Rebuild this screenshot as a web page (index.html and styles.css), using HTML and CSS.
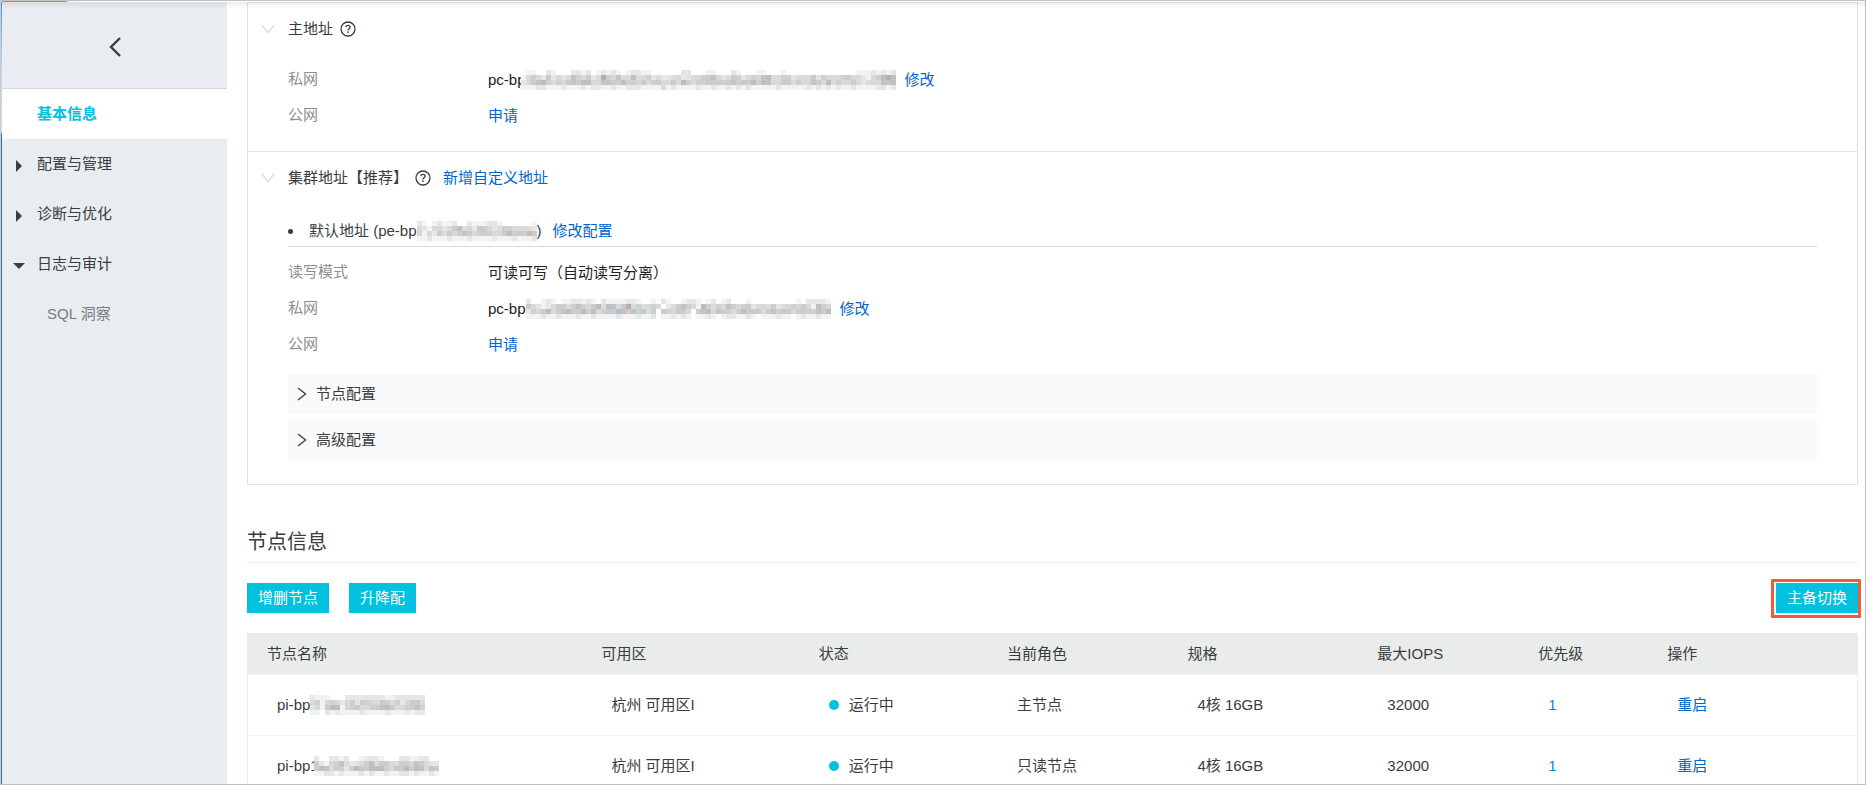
FILE: index.html
```html
<!DOCTYPE html>
<html lang="zh-CN">
<head>
<meta charset="utf-8">
<title>基本信息</title>
<link rel="stylesheet" href="styles.css">
</head>
<body>
<svg class="defs" aria-hidden="true">
  <symbol id="help" viewBox="0 0 16 16"><circle cx="8" cy="8" r="7" fill="none" stroke="currentColor" stroke-width="1.3"/><path d="M5.9 6.3C5.9 3.6 10.1 3.7 10.1 6.2C10.1 7.8 8 7.7 8 9.5" fill="none" stroke="currentColor" stroke-width="1.3"/><path d="M7.3 10.6h1.4v1.5H7.3z" fill="currentColor"/></symbol>
  <symbol id="down" viewBox="0 0 14 10"><path d="M.7.8 7 8.8 13.3.8" fill="none" stroke="currentColor" stroke-width="1.4"/></symbol>
  <symbol id="right" viewBox="0 0 10 14"><path d="M1 1 8.6 7 1 13" fill="none" stroke="currentColor" stroke-width="1.3"/></symbol>
</svg>
<div class="app">
  <div class="tab-mark"></div>
  <aside class="sidebar">
    <button class="collapse" type="button" aria-label="返回"><svg width="12" height="20" viewBox="0 0 12 20"><path d="M11 1 2 10l9 9" fill="none" stroke="currentColor" stroke-width="2.4"/></svg></button>
    <nav class="menu">
      <a class="item active" href="#">基本信息</a>
      <a class="item" href="#"><svg class="caret" viewBox="0 0 12 12"><path d="M3 0 9 6 3 12z"/></svg>配置与管理</a>
      <a class="item" href="#"><svg class="caret" viewBox="0 0 12 12"><path d="M3 0 9 6 3 12z"/></svg>诊断与优化</a>
      <a class="item" href="#"><svg class="caret" viewBox="0 0 12 12"><path d="M0 3H12L6 9z"/></svg>日志与审计</a>
      <a class="item sub" href="#">SQL 洞察</a>
    </nav>
  </aside>
  <main class="main">
    <div class="card">
      <section class="block">
        <header class="head"><svg class="fold"><use href="#down"/></svg><h2>主地址</h2><svg class="help"><use href="#help"/></svg></header>
        <dl class="fields">
          <dt>私网</dt><dd>pc-bp<span class="mosaic over" data-m="a"></span><a class="after" href="#">修改</a></dd>
          <dt>公网</dt><dd><a href="#">申请</a></dd>
        </dl>
      </section>
      <section class="block second">
        <header class="head"><svg class="fold"><use href="#down"/></svg><h2>集群地址【推荐】</h2><svg class="help"><use href="#help"/></svg><a href="#" class="add">新增自定义地址</a></header>
        <div class="endpoint"><span class="bullet"></span><span>默认地址 (pe-bp</span><span class="mosaic" data-m="b"></span><span>)</span><a href="#">修改配置</a></div>
        <dl class="fields">
          <dt>读写模式</dt><dd>可读可写（自动读写分离）</dd>
          <dt>私网</dt><dd>pc-bp<span class="mosaic" data-m="c"></span><a class="after" href="#">修改</a></dd>
          <dt>公网</dt><dd><a href="#">申请</a></dd>
        </dl>
        <div class="panels">
          <button class="panel" type="button"><svg><use href="#right"/></svg>节点配置</button>
          <button class="panel" type="button"><svg><use href="#right"/></svg>高级配置</button>
        </div>
      </section>
    </div>
    <h1>节点信息</h1>
    <div class="toolbar">
      <button class="btn" type="button">增删节点</button>
      <button class="btn" type="button">升降配</button>
      <span class="highlight"><button class="btn" type="button">主备切换</button></span>
    </div>
    <table class="nodes">
      <colgroup><col class="c1"><col class="c2"><col class="c3"><col class="c4"><col class="c5"><col class="c6"><col class="c7"><col></colgroup>
      <thead><tr><th>节点名称</th><th>可用区</th><th>状态</th><th>当前角色</th><th>规格</th><th>最大IOPS</th><th>优先级</th><th>操作</th></tr></thead>
      <tbody>
        <tr><td><span class="name">pi-bp<span class="mosaic" data-m="d"></span></span></td><td>杭州 可用区I</td><td><span class="dot"></span>运行中</td><td>主节点</td><td>4核 16GB</td><td>32000</td><td><a class="num" href="#">1</a></td><td><a href="#">重启</a></td></tr>
        <tr><td><span class="name">pi-bp1<span class="mosaic over" data-m="e"></span></span></td><td>杭州 可用区I</td><td><span class="dot"></span>运行中</td><td>只读节点</td><td>4核 16GB</td><td>32000</td><td><a class="num" href="#">1</a></td><td><a href="#">重启</a></td></tr>
      </tbody>
    </table>
  </main>
</div>
<script src="mosaic.js"></script>
</body>
</html>
```

FILE: styles.css
```css
* { box-sizing: border-box; }
body, h1, h2, dl, dd { margin: 0; }
body {
  font: 15px/20px "Liberation Sans", "Noto Sans CJK SC", sans-serif;
  color: #373d41;
  background: #fff;
}
button { font: inherit; color: inherit; border: 0; padding: 0; cursor: pointer; }
a { color: #06c; text-decoration: none; }
.defs { position: absolute; width: 0; height: 0; }

.app {
  position: relative;
  display: flex;
  height: 100vh;
  overflow: hidden;
  padding: 1px 7px 0 1px;
  border: 1px solid #c0c0c0;
  border-left-color: #c9cdd1;
}
.app::before {
  content: "";
  position: absolute;
  inset: 1px 0 auto 0;
  height: 7px;
  background: linear-gradient(rgba(0, 0, 0, .07), rgba(0, 0, 0, 0));
}
.app::after {
  content: "";
  position: absolute;
  inset: 1px auto 0 0;
  width: 1px;
  background: linear-gradient(#4d93d0 0, #b9d2e8 60px, #d5e0ea 130px, #2f74b0 132px);
}
.tab-mark { position: absolute; top: 0; left: 1px; width: 65px; height: 1px; background: #f27a24; }

.sidebar { flex: 0 0 225px; background: #e9edf1; }
.collapse {
  display: flex;
  align-items: center;
  justify-content: center;
  width: 100%;
  height: 87px;
  padding-top: 4px;
  background: none;
  border-bottom: 1px solid #d3d6d9;
}
.menu { display: flex; flex-direction: column; }
.item {
  display: flex;
  align-items: center;
  position: relative;
  height: 50px;
  padding-left: 35px;
  color: #373d41;
}
.item.active { background: #fff; color: #00c1de; font-weight: 700; }
.item.sub { padding-left: 45px; color: #777c80; }
.caret { position: absolute; left: 11px; top: 21px; width: 12px; height: 12px; fill: #373d41; }

.main { flex: 1; min-width: 0; padding-left: 20px; }
.card { border: 1px solid #e0e1e2; padding-bottom: 24px; }
.block { padding: 0 40px; }
.block + .block { border-top: 1px solid #e0e1e2; }
.head { display: flex; align-items: center; height: 52px; }
.head h2 { font-size: 15px; font-weight: 400; }
.fold { width: 14px; height: 10px; margin: 0 13px 0 -27px; color: #dcdedf; }
.help { width: 16px; height: 16px; margin-left: 7px; }
.add { margin-left: 12px; }
.fields {
  display: grid;
  grid-template-columns: 200px 1fr;
  grid-auto-rows: 36px;
  line-height: 36px;
}
.block > .head + .fields { padding: 6px 0 18px; box-sizing: content-box; }
.fields dt { color: #8c8f92; }
.fields dd { display: flex; align-items: center; padding-top: 2px; color: #222; }
.after { margin-left: 9px; }

.endpoint {
  display: flex;
  align-items: center;
  height: 43px;
  padding-top: 12px;
  border-bottom: 1px solid #d9dadb;
}
.second .endpoint { margin-bottom: 7px; }
.bullet { width: 5px; height: 5px; margin-right: 16px; border-radius: 50%; background: #373d41; }
.endpoint a { margin-left: 11px; }
.panels { display: grid; gap: 6px; padding-top: 12px; }
.panel {
  display: flex;
  align-items: center;
  gap: 9px;
  height: 40px;
  padding-left: 9px;
  background: #fafafa;
}
.panel svg { width: 10px; height: 14px; }

h1 {
  margin-top: 38px;
  padding: 4px 0 5px;
  border-bottom: 1px solid #ebecec;
  font-size: 20px;
  line-height: 30px;
  font-weight: 400;
}
.toolbar { display: flex; gap: 20px; padding: 20px 0; }
.btn { height: 30px; min-width: 67px; padding: 0 11px; background: #00c1de; color: #fff; }
.highlight { position: relative; margin-left: auto; display: flex; }
.highlight::after {
  content: "";
  position: absolute;
  inset: -4px -3px -5px -5px;
  border: 3px solid #f25c38;
  border-radius: 1px;
  pointer-events: none;
}

.nodes { width: 100%; table-layout: fixed; border-collapse: collapse; border: 1px solid #ebecec; }
.c1 { width: 20.8%; }
.c2 { width: 13.5%; }
.c3 { width: 11.7%; }
.c4 { width: 11.2%; }
.c5 { width: 11.8%; }
.c6 { width: 10%; }
.c7 { width: 8%; }
th { height: 41px; padding: 0 19px; background: #eaecec; font-weight: 400; text-align: left; }
td { height: 61px; padding: 0 29px; border-top: 1px solid #f1f2f3; white-space: nowrap; }
.name { display: flex; align-items: center; }
.dot {
  display: inline-block;
  width: 10px;
  height: 10px;
  margin-right: 10px;
  border-radius: 50%;
  background: #00c1de;
}
.num { color: #0a84d8; }

.mosaic { display: block; position: relative; height: 20px; background: #fff; }
.mosaic svg { display: block; height: 20px; }
.mosaic.over { margin-left: -5px; }
```

FILE: mosaic.js
```javascript
// Redacted identifiers: each digit is the darkness of one 5px cell.
const masks = {
  a: ["011002100022120121210122110000002200011000210001100010000000000000011121212",
      "134324232354342364353353342322332233445323442343553344233342433344332134565",
      "234554343454553355445443434433435434444444544454553344343354353433432333555",
      "111221112111212211211222111131211112112112121211111211111212121211211112212"],
  b: ["210121120021112210000001",
      "321332345332443234433332",
      "313243434543444334544454",
      "112111211121111211121112"],
  c: ["2001210112212102111122100102100122101201200010000000001022221",
      "4321234434543453553463433430234543154343543442333423343431543",
      "2434534554454534445545443404434430455354434544434544434444545",
      "1112112111211211112111211201121210112101221121011121101211211"],
  d: ["21110002222222211222222",
      "34134323424433443423443",
      "23145513443344554334454",
      "11021211112111121112122"],
  e: ["2002212001222100022112200",
      "4213453223453443344354322",
      "4553442454455543445455354",
      "1122121112121121122121121"]
};
const tones = ["#8d9296", "#a19996", "#929e9a", "#969298", "#9a9f9e", "#a38f8e", "#8a979f"];
const ns = "http://www.w3.org/2000/svg";

document.querySelectorAll(".mosaic").forEach((host) => {
  const rows = masks[host.dataset.m];
  const width = rows[0].length * 5;
  const svg = document.createElementNS(ns, "svg");
  svg.setAttribute("width", width);
  svg.setAttribute("height", 20);
  svg.setAttribute("shape-rendering", "crispEdges");
  rows.forEach((row, y) => {
    [...row].forEach((level, x) => {
      const cell = document.createElementNS(ns, "rect");
      cell.setAttribute("x", x * 5);
      cell.setAttribute("y", y * 5);
      cell.setAttribute("width", 5);
      cell.setAttribute("height", 5);
      cell.setAttribute("fill", tones[(x * 3 + y * 2 + Number(level)) % tones.length]);
      cell.setAttribute("fill-opacity", Number(level) * 0.12);
      svg.appendChild(cell);
    });
  });
  host.appendChild(svg);
});
```
